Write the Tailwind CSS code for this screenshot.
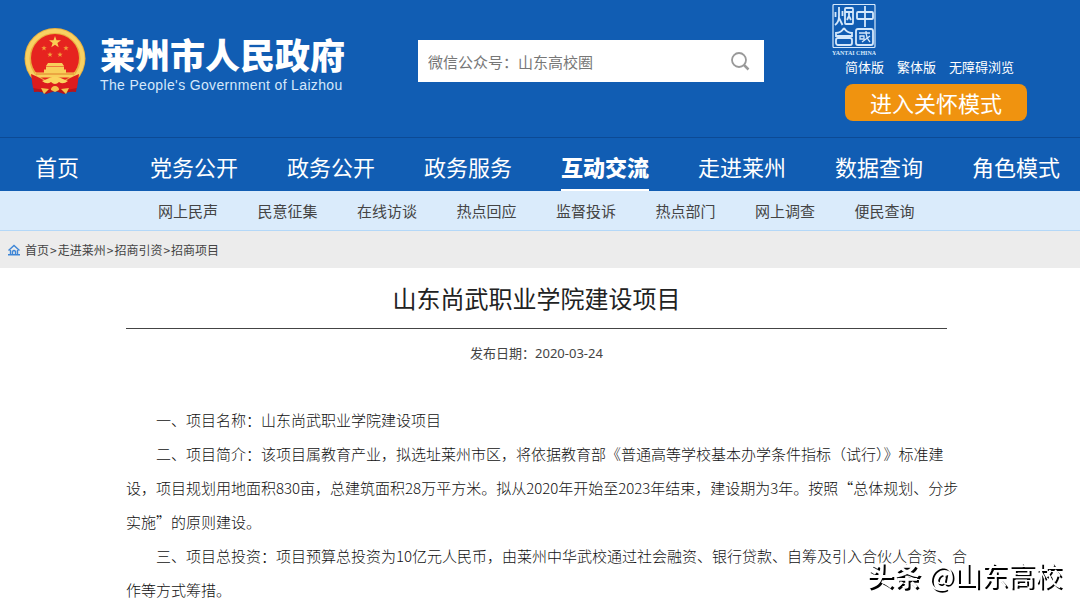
<!DOCTYPE html>
<html lang="zh-CN">
<head>
  <meta charset="UTF-8">
  <meta name="viewport" content="width=device-width, initial-scale=1.0">
  <script src="https://cdn.jsdelivr.net/npm/@tailwindcss/browser@4"></script>
  <title>山东尚武职业学院建设项目 - 莱州市人民政府</title>
</head>
<body class="bg-white font-['Noto_Sans_CJK_SC',sans-serif] text-[#444] overflow-x-hidden">

  <!-- Header -->
  <header class="bg-[#115db3] text-white">
    <div class="flex items-start h-[137px] pl-6">
      <a href="#" class="flex items-center pt-7 w-[394px] shrink-0">
        <svg class="w-[62px] h-[66px] mr-[14px] shrink-0" viewBox="0 0 62 66" aria-hidden="true">
          <path d="M7 45 L10 64 Q18 63 22 66 L31 63 L40 66 Q45 63 52 64 L55 45 Z" fill="#b8141a"/>
          <circle cx="31" cy="30.5" r="30.5" fill="#e9b03f"/>
          <circle cx="31" cy="30.5" r="27.5" fill="none" stroke="#f8d163" stroke-width="4"/>
          <circle cx="31" cy="30" r="24" fill="#e6231f"/>
          <path d="M31 8 L32.500 12.300 L37 12.300 L33.400 15 L34.700 19.300 L31 16.700 L27.300 19.300 L28.600 15 L25 12.300 L29.500 12.300 Z" fill="#f9cf55"/>
          <path id="star" d="M20 17.500 l.7 1.800 h2 l-1.600 1.200 .6 1.900 -1.700-1.200 -1.700 1.200 .6-1.900 -1.600-1.200 h2z" fill="#f3a13a"/>
          <use href="#star" x="22"/>
          <use href="#star" x="6" y="6.500"/>
          <use href="#star" x="16" y="6.500"/>
          <path d="M24 35 h14 l2 3 h-18z M22 38.500 h18 v3 h2 v3 h9 q-1 3 -3 5 h-34 q-2 -2 -3 -5 h9 v-3 h2z" fill="#f8cf5a"/>
          <path d="M12 46 h38" stroke="#df7f2a" stroke-width="1"/>
          <path d="M7 46 Q17 50 22 54 H40 Q45 50 55 46 L53 60 Q42 63 31 61 Q20 63 9 60 Z" fill="#dc1c1d"/>
          <path d="M23 51 Q31 46 39 51 L44 53 Q39 57 35 54 Q31 58 27 54 Q23 57 18 53 Z" fill="#fbd45f"/>
          <path d="M17 60 l8 1 -5 5z M45 60 l-8 1 5 5z M31 58 a4 3.500 0 0 1 4 4 l-4 2 -4 -2 a4 3.500 0 0 1 4 -4z" fill="#f4c24c"/>
        </svg>
        <span class="flex flex-col">
          <span class="pt-px text-[35px] leading-[46px] font-black whitespace-nowrap">莱州市人民政府</span>
          <span class="font-['Liberation_Sans',sans-serif] text-[14px] leading-4 tracking-wide whitespace-nowrap text-[#d5e8fb]">The People's Government of Laizhou</span>
        </span>
      </a>

      <form class="mt-10 flex h-[42px] w-[346px] shrink-0 items-center bg-white">
        <label for="search" class="sr-only">搜索</label>
        <input id="search" type="text" placeholder="微信公众号：山东高校圈" class="h-full min-w-0 flex-1 px-[10px] text-[15px] leading-6 text-[#666] placeholder:text-[#777] outline-none">
        <button type="button" aria-label="搜索" class="mr-3 p-[2px]">
          <svg class="size-5" viewBox="0 0 20 20" fill="none" stroke="#999" stroke-width="1.800">
            <circle cx="9" cy="9" r="7"/>
            <path d="M14 14 L18.500 18.500" stroke-width="2.500"/>
          </svg>
        </button>
      </form>

      <div class="ml-[68px] pt-1 shrink-0">
        <svg class="block w-11 h-[52px]" viewBox="0 0 44 52" fill="none" stroke="#d5e8fb" role="img" aria-label="中国烟台">
          <rect x="1" y=".5" width="42" height="43" rx="1" stroke-width="1.200"/>
          <g stroke-width="1.800">
            <path d="M7 3 V12 Q7 18 3 21 M3.500 8 V13 M10.500 7 V12 M7 14 L10.500 21"/>
            <rect x="13" y="4" width="8" height="16" rx="1"/>
            <path d="M13 8 H21 M17 8 V13 M15 16 L17 12 L19 16"/>
            <rect x="25" y="8" width="16" height="7" rx="1"/>
            <path d="M33 2 V23"/>
            <path d="M12 24 Q9 29 4 29 V32 H20 V29 Q15 29 12 24"/>
            <rect x="4" y="34" width="16" height="7" rx="2"/>
            <rect x="24" y="25" width="17" height="16" rx="2"/>
            <path stroke-width="1.300" d="M27 29 H38 M34 27 Q34 34 38 38 M38 32 L30 38 M28 32 H32 V35 H28 Z"/>
          </g>
          <text x="22" y="51" text-anchor="middle" fill="#d5e8fb" stroke="none" font-family="Liberation Serif, serif" font-size="6" font-weight="bold">YANTAI CHINA</text>
        </svg>
        <div class="ml-[13px] pt-px">
          <div class="flex gap-[13px] text-[13px] leading-5 whitespace-nowrap">
            <a href="#">简体版</a>
            <a href="#">繁体版</a>
            <a href="#">无障碍浏览</a>
          </div>
          <button type="button" class="mt-[7px] h-[37px] w-[182px] rounded-lg bg-[#f0930f] text-[22px] leading-[37px]">进入关怀模式</button>
        </div>
      </div>
    </div>

    <!-- Main navigation -->
    <nav class="flex h-[54px] border-t border-[#0c4a95] pl-[35px] text-[22px] leading-[56px] whitespace-nowrap">
      <a href="#" class="mr-[71px]">首页</a>
      <div class="flex gap-[49px]">
        <a href="#">党务公开</a>
        <a href="#">政务公开</a>
        <a href="#">政务服务</a>
        <a href="#" class="h-full border-b-2 border-white font-black">互动交流</a>
        <a href="#">走进莱州</a>
        <a href="#">数据查询</a>
        <a href="#">角色模式</a>
      </div>
    </nav>
  </header>

  <!-- Sub navigation -->
  <nav class="h-10 border-b border-[#b4d8f8] bg-[#daebfb] pl-[158px] text-[15px] leading-10 whitespace-nowrap">
    <div class="grid w-[796px] grid-cols-8">
      <a href="#">网上民声</a>
      <a href="#">民意征集</a>
      <a href="#">在线访谈</a>
      <a href="#">热点回应</a>
      <a href="#">监督投诉</a>
      <a href="#">热点部门</a>
      <a href="#">网上调查</a>
      <a href="#">便民查询</a>
    </div>
  </nav>

  <!-- Breadcrumb -->
  <nav class="flex h-[37px] items-center bg-[#ececec] pl-2 text-xs">
    <svg class="mr-[5px] size-3" viewBox="0 0 12 12" fill="none" stroke="#3f86d6" stroke-width="1.400">
      <path d="M0.500 6.500 L6 1.500 L11.500 6.500 M2.500 6 V10.500 M9.500 6 V10.500 M0 10.800 H12 M4.500 10.500 V7.500 Q6 5.500 7.500 7.500 V10.500"/>
    </svg>
    <div class="flex">
      <a href="#">首页</a><span class="px-px">&gt;</span><a href="#">走进莱州</a><span class="px-px">&gt;</span><a href="#">招商引资</a><span class="px-px">&gt;</span><a href="#">招商项目</a>
    </div>
  </nav>

  <!-- Article -->
  <main class="ml-[126px] mr-[133px]">
    <h1 class="border-b border-[#444] pt-[10px] pb-[10px] text-center text-2xl leading-10 text-[#222]">山东尚武职业学院建设项目</h1>
    <p class="mt-3 text-center font-['Noto_Sans','Noto_Sans_CJK_SC',sans-serif] text-[13px] leading-6">发布日期：2020-03-24</p>
    <article class="mt-[38px] text-[15px] leading-[34px] font-light whitespace-nowrap text-[#111]">
      <p class="indent-[30px]">一、项目名称：山东尚武职业学院建设项目</p>
      <p class="indent-[30px]">二、项目简介：该项目属教育产业，拟选址莱州市区，将依据教育部《普通高等学校基本办学条件指标（试行）》标准建<br>设，项目规划用地面积830亩，总建筑面积28万平方米。拟从2020年开始至2023年结束，建设期为3年。按照“总体规划、分步<br>实施”的原则建设。</p>
      <p class="indent-[30px]">三、项目总投资：项目预算总投资为10亿元人民币，由莱州中华武校通过社会融资、银行贷款、自筹及引入合伙人合资、合<br>作等方式筹措。</p>
    </article>
  </main>

  <!-- Watermark -->
  <div class="fixed right-[18px] bottom-[13px] flex gap-2 text-[27px] leading-10 whitespace-nowrap text-white [text-shadow:2px_2px_0_#000]">
    <span class="font-bold">头条</span>
    <span>@山东高校</span>
  </div>

</body>
</html>
